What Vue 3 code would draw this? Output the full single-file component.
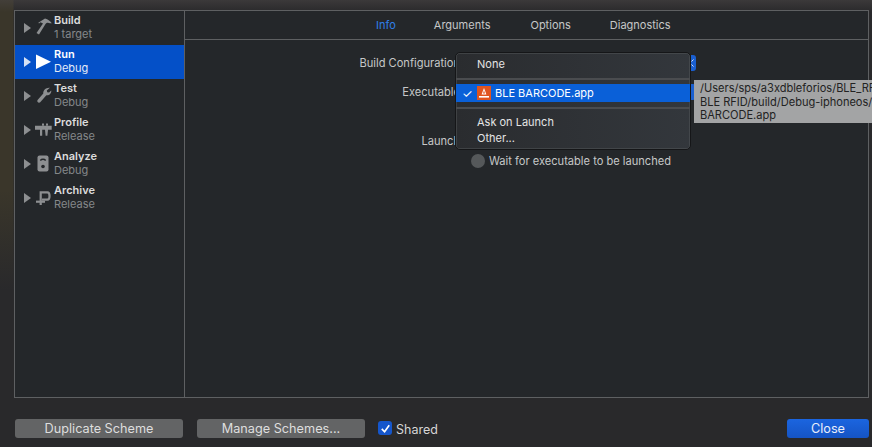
<script setup>
const schemes = [
  { name: 'Build', sub: '1 target', icon: 'build' },
  { name: 'Run', sub: 'Debug', icon: 'run', active: true },
  { name: 'Test', sub: 'Debug', icon: 'test' },
  { name: 'Profile', sub: 'Release', icon: 'profile' },
  { name: 'Analyze', sub: 'Debug', icon: 'analyze' },
  { name: 'Archive', sub: 'Release', icon: 'archive' }
]
const tabs = ['Info', 'Arguments', 'Options', 'Diagnostics']
</script>

<template>
  <div class="sheet">
    <div class="panel">
      <aside class="side">
        <div v-for="s in schemes" :key="s.name" class="row" :class="{ active: s.active }">
          <span class="tri"></span>
          <svg class="ico" viewBox="0 0 20 20" width="20" height="20">
            <path v-if="s.icon === 'build'" fill="#8d8f91" d="M4.3 4.7 L11 0.5 C14 1.5 16.5 3 17.8 5.3 L16 5.2 C14 4.2 12.5 4.6 11.5 6 L5 16.5 L2.5 15 L9 5.5 L6.5 4.3 L5 5.5 Z" />
            <path v-else-if="s.icon === 'run'" fill="#fff" d="M2 2.5 L17 9.8 L2 17 Z" />
            <path v-else-if="s.icon === 'test'" transform="translate(0.5 0) scale(.88)" fill="#8d8f91" d="M17.5 2 L14 5 L14.5 7 L16.5 7.5 L19 5 C19.5 8 17 11 13.5 10.5 L6.5 18.5 C5 20 2 18 3.5 16 L10 8.5 C9.5 5 13 1.5 17.5 2 Z" />
            <g v-else-if="s.icon === 'profile'" fill="#8d8f91">
              <path d="M1 5.7 H17.7 V9.7 H14 L13.4 15.7 H11.6 L11 9.7 H8.2 V15.7 H6 V9.7 H1 Z" />
              <rect x="8" y="3.5" width="2" height="2.2" />
              <rect x="12" y="3.5" width="2" height="2.2" />
            </g>
            <g v-else-if="s.icon === 'analyze'">
              <rect x="3.5" y="1.5" width="11" height="16" rx="2" fill="#8d8f91" />
              <path d="M6.3 6.5 A3.8 3.8 0 0 1 11.7 6.5" fill="none" stroke="#24272a" stroke-width="1.5" />
              <circle cx="9" cy="12.5" r="1.8" fill="#24272a" />
            </g>
            <g v-else fill="none" stroke="#8d8f91" stroke-width="2.2">
              <path d="M6.7 17 V4.4 H13.5 C16.2 4.4 16.2 11.6 13.5 11.6 H8" />
              <path d="M2 13.7 H11" />
            </g>
          </svg>
          <div class="labels">
            <div class="name">{{ s.name }}</div>
            <div class="sub">{{ s.sub }}</div>
          </div>
        </div>
      </aside>

      <section class="main">
        <nav class="tabs">
          <span v-for="(t, i) in tabs" :key="t" class="tab" :class="{ on: i === 0 }">{{ t }}</span>
        </nav>
        <div class="form">
          <div class="field first">
            <label>Build Configuration</label>
            <span class="stepper">
              <svg viewBox="0 0 5 16" width="5" height="16"><path d="M0.5 6.5 L2.5 4.5 M0.5 9.5 L2.5 11.5" fill="none" stroke="#d5e1f5" stroke-width="1" /></svg>
            </span>
          </div>
          <div class="field second">
            <label>Executable</label>
            <span class="stepper"></span>
          </div>
          <div class="field third">
            <label>Launch</label>
            <span class="radio"></span>
          </div>
          <div class="field fourth">
            <label></label>
            <span class="radio"></span>
            <span class="wait">Wait for executable to be launched</span>
          </div>
        </div>
      </section>
    </div>

    <footer class="foot">
      <button class="btn dup">Duplicate Scheme</button>
      <button class="btn man">Manage Schemes...</button>
      <span class="check">
        <svg viewBox="0 0 14 14" width="13" height="13"><path d="M3 7.5 L6 10.5 L11 3.5" fill="none" stroke="#fff" stroke-width="1.8" /></svg>
      </span>
      <span class="shared">Shared</span>
      <button class="btn close">Close</button>
    </footer>

    <div class="menu">
      <div class="mi top">None</div>
      <div class="sep"></div>
      <div class="mi sel">
        <span class="tick">✓</span>
        <svg class="appicon" viewBox="0 0 14 14" width="14" height="14">
          <rect width="14" height="14" fill="#e0541f" />
          <path d="M7 2 L9.4 8.5 H4.6 Z" fill="#fff" />
          <path d="M7 4.5 L8 7.5 H6 Z" fill="#e0541f" />
          <rect x="2" y="10" width="10" height="1.6" fill="#fff" />
        </svg>
        <span>BLE BARCODE.app</span>
      </div>
      <div class="sep"></div>
      <div class="mi ask">Ask on Launch</div>
      <div class="mi other">Other...</div>
    </div>

    <div class="tip">/Users/sps/a3xdbleforios/BLE_RFID/<br />BLE RFID/build/Debug-iphoneos/BLE<br />BARCODE.app</div>
  </div>
</template>

<style>
html, body { margin: 0; padding: 0; background: #282a2c; overflow: hidden; }
</style>

<style scoped>
.sheet {
  position: relative;
  width: 872px;
  height: 447px;
  overflow: hidden;
  box-sizing: border-box;
  padding: 10px 3px 0 14px;
  display: flex;
  flex-direction: column;
  font-family: Inter, "Liberation Sans", sans-serif;
  background:
    linear-gradient(180deg, rgba(74, 70, 70, .55) 0, rgba(40, 42, 44, 0) 12px),
    linear-gradient(90deg, #3a362a 0, #3a362a 13px, rgba(40, 42, 44, 0) 14px),
    #29292b;
}
.sheet::after {
  content: "";
  position: absolute;
  left: 0;
  top: 190px;
  width: 14px;
  height: 257px;
  background: linear-gradient(180deg, rgba(41, 41, 43, 0), #29292b 100px);
  pointer-events: none;
}
.panel {
  height: 388px;
  box-sizing: border-box;
  border: 1px solid #5e6062;
  background: #24272a;
  display: flex;
  flex-shrink: 0;
}
.side {
  width: 169px;
  border-right: 1px solid #5e6062;
  flex-shrink: 0;
}
.row {
  height: 34px;
  display: flex;
  align-items: center;
  color: #8d8f91;
}
.row.active { background: #0450c8; color: #fff; }
.tri {
  margin-left: 9px;
  width: 0;
  height: 0;
  border-left: 7px solid #8d8f91;
  border-top: 5px solid transparent;
  border-bottom: 5px solid transparent;
}
.active .tri { border-left-color: #d5e1f5; }
.ico { margin-left: 3px; flex-shrink: 0; }
.labels { line-height: 14px; font-size: 11px; padding-bottom: 2px; }
.name { font-weight: 600; color: #dcdcdc; }
.active .name { color: #fff; }
.sub { color: #85888a; }
.active .sub { color: #e3ebf8; }
.main { flex: 1; min-width: 0; }
.tabs {
  height: 28px;
  border-bottom: 1px solid #5e6062;
  display: flex;
  align-items: center;
  font-size: 11px;
  color: #c6c7c8;
}
.tab:nth-child(1) { margin-left: 191px; }
.tab:nth-child(2) { margin-left: 38px; }
.tab:nth-child(3) { margin-left: 40px; }
.tab:nth-child(4) { margin-left: 39px; }
.tab.on { color: #2f7fe8; }
.form { display: flex; flex-direction: column; font-size: 11.1px; color: #c6c7c8; }
.field { display: flex; align-items: center; height: 16px; }
.field label { width: 275px; text-align: right; flex-shrink: 0; white-space: nowrap; }
.first { margin-top: 15px; }
.second { margin-top: 13px; }
.third { margin-top: 33px; }
.fourth { margin-top: 4px; }
.stepper {
  margin-left: 231px;
  width: 5px;
  height: 16px;
  border-radius: 0 3px 3px 0;
  background: #1a5fd0;
  display: flex;
}
.radio {
  margin-left: 11px;
  width: 14px;
  height: 14px;
  border-radius: 50%;
  background: #55585a;
}
.wait { margin-left: 4px; white-space: nowrap; }
.foot { position: relative; height: 49px; }
.btn {
  position: absolute;
  top: 21px;
  height: 19px;
  border: none;
  border-radius: 3px;
  background: #636465;
  color: #dedede;
  font: 12.7px Inter, "Liberation Sans", sans-serif;
  padding: 0;
}
.dup { left: 1px; width: 168px; }
.man { left: 183px; width: 168px; }
.close { left: 773px; width: 82px; background: linear-gradient(180deg, #1b65e0, #1554c4); color: #e8eefb; }
.check {
  position: absolute;
  left: 364px;
  top: 23px;
  width: 14px;
  height: 14px;
  border-radius: 3px;
  background: #1556cc;
  display: flex;
  align-items: center;
  justify-content: center;
}
.shared { position: absolute; left: 382px; top: 24px; font-size: 12.5px; color: #d6d6d6; }
.menu {
  position: absolute;
  left: 455px;
  top: 52px;
  width: 236px;
  height: 98px;
  box-sizing: border-box;
  border: 1px solid #151618;
  border-radius: 5px;
  background: linear-gradient(90deg, #2a2c2f, #33373c);
  box-shadow: 0 0 0 .5px #55585a inset;
  color: #e4e4e4;
  font-size: 11px;
}
.mi { display: flex; align-items: center; padding-left: 21px; height: 16px; }
.top { margin-top: 3px; }
.sep { height: 2px; background: #4a4c4f; }
.menu .sep:nth-child(2) { margin-top: 6px; margin-bottom: 4px; }
.menu .sep:nth-child(4) { margin-top: 5px; margin-bottom: 5px; }
.sel { height: 18px; background: #0a60d8; color: #fff; position: relative; }
.tick { position: absolute; left: 6px; font-size: 12px; }
.appicon { margin-right: 4px; }
.tip {
  position: absolute;
  left: 694px;
  top: 80px;
  height: 43px;
  width: 190px;
  box-sizing: border-box;
  padding: 2px 0 0 6px;
  background: #a3a4a5;
  color: #222;
  font-size: 11.05px;
  line-height: 13.5px;
  white-space: nowrap;
}
</style>
